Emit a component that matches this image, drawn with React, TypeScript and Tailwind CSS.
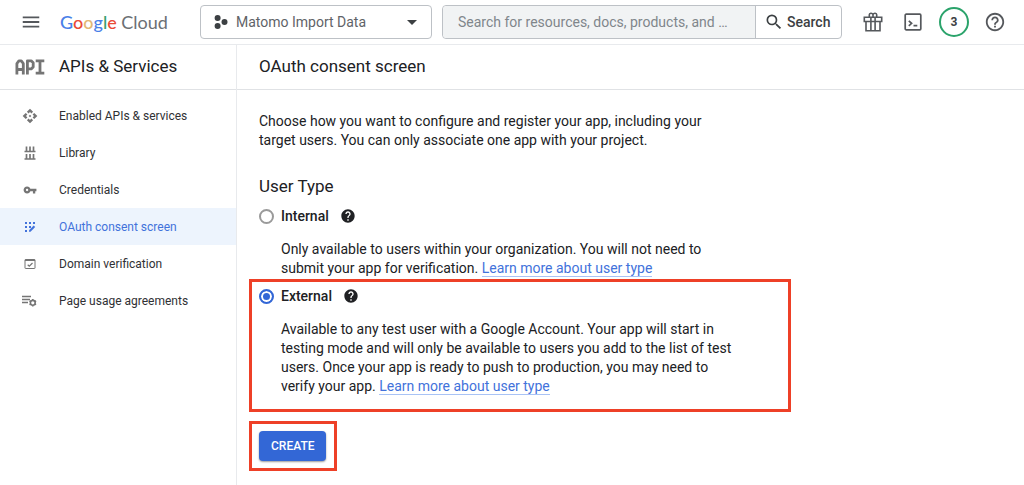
import type { ReactNode } from "react";
import { MdApi, MdArrowDropDown, MdHelp, MdHelpOutline, MdMenu, MdSearch, MdVpnKey } from "react-icons/md";

function ProjectIcon() {
    return (
        <svg viewBox="0 0 14 14" className="size-[14px] fill-[#3c4043]">
            <circle cx="3.6" cy="3" r="3" />
            <circle cx="3.6" cy="11" r="3" />
            <circle cx="10.5" cy="7" r="3" />
        </svg>
    );
}

function GiftIcon() {
    return (
        <svg viewBox="0 0 20 20" fill="none" stroke="#55585c" strokeWidth="1.6" className="size-5">
            <path d="M1.3 5.3h17.4v4.2H1.3zM3 9.5h14v9.2H3zM7.9 5.3v13.4M12.100 5.3v13.4" />
            <path d="M6.300 5V2.800C6.300.8 9.200.6 10 2.500c.8-1.900 3.700-1.700 3.700.3V5M10 2.500V5" />
        </svg>
    );
}

function ShellIcon() {
    return (
        <svg viewBox="0 0 18 18" fill="none" stroke="#55585c" strokeWidth="1.7" className="size-[18px]">
            <rect x="1.2" y="1.2" width="15.6" height="15.6" rx="1" />
            <path d="M4.8 7.8 7.600 10.300l-2.800 2.500M9.500 12.700h3.800" />
        </svg>
    );
}

function ApiLogo() {
    return (
        <svg viewBox="0 0 30 16" fill="none" stroke="#757575" strokeLinejoin="round" strokeWidth="2.8" className="h-4 w-[30px]">
            <path d="M1.9 15.500V4.500l2-2.700h2.400l2 2.700v11M1.9 10.500h6.400" />
            <path d="M12.400 15.500V1.800h3.800l2 1.900v4.200l-2 2h-3.800" />
            <path d="M20.700 1.900h8.600M20.700 14.100h8.600M25 1.900v12.200" />
        </svg>
    );
}

function LibraryIcon() {
    return (
        <svg viewBox="0 0 12 14" fill="none" stroke="currentColor" strokeWidth="1.7" className="h-[14px] w-3">
            <path d="M.5 5.500h11M2.500.5v5M6 .5v5M9.500.5v5" />
            <path d="M.5 13h11M2.500 8v5M6 8v5M9.500 8v5" />
        </svg>
    );
}

function ConsentIcon() {
    return (
        <svg viewBox="0 0 12 12" fill="currentColor" className="size-3">
            <path d="M1 1h2v2H1zM5 1h2v2H5zM9 1h2v2H9zM1 5h2v2H1zM5 5h2v2H5zM1 9h2v2H1z" />
            <path d="M5 9.200 9.700 4.500l1.500 1.500-4.700 4.800H5z" />
        </svg>
    );
}

function DomainIcon() {
    return (
        <svg viewBox="0 0 12 12" fill="none" stroke="currentColor" className="size-3">
            <rect x="1" y="1.500" width="10" height="9" rx=".5" />
            <path d="M1 2.200h10" strokeWidth="1.600" />
            <path d="m3.700 6.700 1.600 1.500L8.500 5" strokeWidth="1.200" />
        </svg>
    );
}

function AgreementsIcon() {
    return (
        <svg viewBox="0 0 15 12" fill="none" stroke="currentColor" className="h-3 w-[15px]">
            <path d="M0 1.500h9M0 4.500h8M0 7.500h6" strokeWidth="1.400" />
            <circle cx="10.800" cy="7.800" r="2.400" strokeWidth="1.600" />
            <path
                d="M10.800 4v1.200M10.800 10.400v1.200M7.500 5.900l1.100.6M13 9.100l1.100.6M7.500 9.700l1.100-.6M13 6.500l1.100-.6"
                strokeWidth="1.500"
            />
        </svg>
    );
}

const navItems = [
    { label: "Enabled APIs & services", icon: <MdApi className="size-4" /> },
    { label: "Library", icon: <LibraryIcon /> },
    { label: "Credentials", icon: <MdVpnKey className="size-[14px]" /> },
    { label: "OAuth consent screen", icon: <ConsentIcon />, active: true },
    { label: "Domain verification", icon: <DomainIcon /> },
    { label: "Page usage agreements", icon: <AgreementsIcon /> },
];

function UserTypeOption({
    id,
    label,
    checked,
    children,
}: {
    id: string;
    label: string;
    checked?: boolean;
    children: ReactNode;
}) {
    return (
        <div>
            <div className="flex h-5 items-center">
                <input
                    type="radio"
                    id={id}
                    name="user-type"
                    defaultChecked={checked}
                    className="size-[15px] appearance-none rounded-full border-2 border-[#9a9a9a] bg-white checked:border-[#3367d6] checked:bg-[#3367d6] checked:shadow-[inset_0_0_0_2px_#fff]"
                />
                <label htmlFor={id} className="ml-[7px] text-sm font-medium">
                    {label}
                </label>
                <button type="button" aria-label={`About ${label}`} className="ml-[11px]">
                    <MdHelp className="size-4" />
                </button>
            </div>
            <p className="mt-[14px] ml-[22px] max-w-[460px]">{children}</p>
        </div>
    );
}

function LearnMore() {
    return (
        <a href="#user-type" className="border-b border-[#a9c3f5] text-[#4272db]">
            Learn more about user type
        </a>
    );
}

export default function App() {
    return (
        <div className="flex flex-col bg-white font-['Roboto',sans-serif] text-[#202124]">
            <header className="flex h-[45px] items-center border-b border-[#e8eaed] pr-[18px] pl-5">
                <button type="button" aria-label="Main menu">
                    <MdMenu className="size-[22px] text-[#55585c]" />
                </button>
                <a
                    href="#home"
                    className="ml-[18px] w-[108px] font-['Lato',sans-serif] text-lg whitespace-nowrap text-[#6b6f74]"
                >
                    <span className="font-medium">
                        <span className="text-[#4a80e8]">G</span>
                        <span className="text-[#ea4a35]">o</span>
                        <span className="text-[#e3b774]">o</span>
                        <span className="text-[#4a80e8]">g</span>
                        <span className="text-[#34a070]">l</span>
                        <span className="text-[#ea4a35]">e</span>
                    </span>{" "}
                    Cloud
                </a>
                <button
                    type="button"
                    className="ml-8 flex h-[34px] w-[232px] items-center rounded border border-[#bdc1c6] pr-[7px] pl-[13px] text-sm text-[#5f6368]"
                >
                    <ProjectIcon />
                    <span className="ml-2">Matomo Import Data</span>
                    <MdArrowDropDown className="ml-auto size-6 text-[#3c4043]" />
                </button>
                <form className="ml-[10px] flex h-[34px] flex-1 rounded border border-[#bdc1c6]">
                    <input
                        type="text"
                        aria-label="Search"
                        placeholder="Search for resources, docs, products, and …"
                        className="min-w-0 flex-1 rounded-l bg-[#f1f3f4] pl-[15px] text-sm placeholder:text-[#80868b]"
                    />
                    <button
                        type="button"
                        className="flex w-[86px] items-center border-l border-[#bdc1c6] pl-2 text-sm font-medium text-[#3c4043]"
                    >
                        <MdSearch className="size-5" />
                        <span className="ml-[3px]">Search</span>
                    </button>
                </form>
                <div className="ml-[21px] flex items-center text-[#55585c]">
                    <button type="button" aria-label="Free trial">
                        <GiftIcon />
                    </button>
                    <button type="button" aria-label="Cloud Shell" className="ml-[21px]">
                        <ShellIcon />
                    </button>
                    <button
                        type="button"
                        className="ml-[17px] size-[30px] rounded-full border-2 border-[#2ba36b] text-xs font-bold text-[#3c4043]"
                    >
                        3
                    </button>
                    <button type="button" aria-label="Help" className="ml-[15px]">
                        <MdHelpOutline className="size-[22px]" />
                    </button>
                </div>
            </header>

            <div className="flex min-h-[440px]">
                <aside className="w-[237px] shrink-0 border-r border-[#e8eaed]">
                    <div className="flex h-[45px] items-center border-b border-[#e0e2e5] pl-[15px]">
                        <ApiLogo />
                        <h2 className="ml-[14px] text-[17px]">APIs &amp; Services</h2>
                    </div>
                    <nav className="pt-[7px]">
                        {navItems.map(({ label, icon, active }) => (
                            <a
                                key={label}
                                href="#nav"
                                className={`flex h-[37px] items-center text-xs ${
                                    active ? "bg-[#edf4fd] text-[#4272db]" : "text-[#303134]"
                                }`}
                            >
                                <span
                                    className={`flex w-[59px] justify-center ${active ? "text-[#4272db]" : "text-[#757575]"}`}
                                >
                                    {icon}
                                </span>
                                {label}
                            </a>
                        ))}
                    </nav>
                </aside>

                <main className="min-w-0 flex-1">
                    <div className="flex h-[45px] items-center border-b border-[#e0e2e5] pl-[22px]">
                        <h1 className="text-[17px]">OAuth consent screen</h1>
                    </div>
                    <div className="px-[22px] pt-[22px] text-sm leading-[19px]">
                        <p className="max-w-[460px]">
                            Choose how you want to configure and register your app, including your target users. You can
                            only associate one app with your project.
                        </p>
                        <h2 className="mt-6 mb-2 text-[17px] leading-6">User Type</h2>

                        <UserTypeOption id="internal" label="Internal">
                            Only available to users within your organization. You will not need to submit your app for
                            verification. <LearnMore />
                        </UserTypeOption>

                        <div className="mt-px -ml-[10px] max-w-[542px] border-[3px] border-[#ee4027] pt-1 pb-[13px] pl-[7px]">
                            <UserTypeOption id="external" label="External" checked>
                                Available to any test user with a Google Account. Your app will start in testing mode and
                                will only be available to users you add to the list of test users. Once your app is ready
                                to push to production, you may need to verify your app. <LearnMore />
                            </UserTypeOption>
                        </div>

                        <div className="mt-[9px] -ml-[10px] w-fit border-[3px] border-[#ee4027] py-[7px] pr-2 pl-[7px]">
                            <button
                                type="button"
                                className="block h-[30px] rounded-sm bg-[#3367d6] px-3 text-xs font-medium text-white shadow-[0_1px_2px_rgba(0,0,0,0.4)]"
                            >
                                CREATE
                            </button>
                        </div>
                    </div>
                </main>
            </div>
        </div>
    );
}
